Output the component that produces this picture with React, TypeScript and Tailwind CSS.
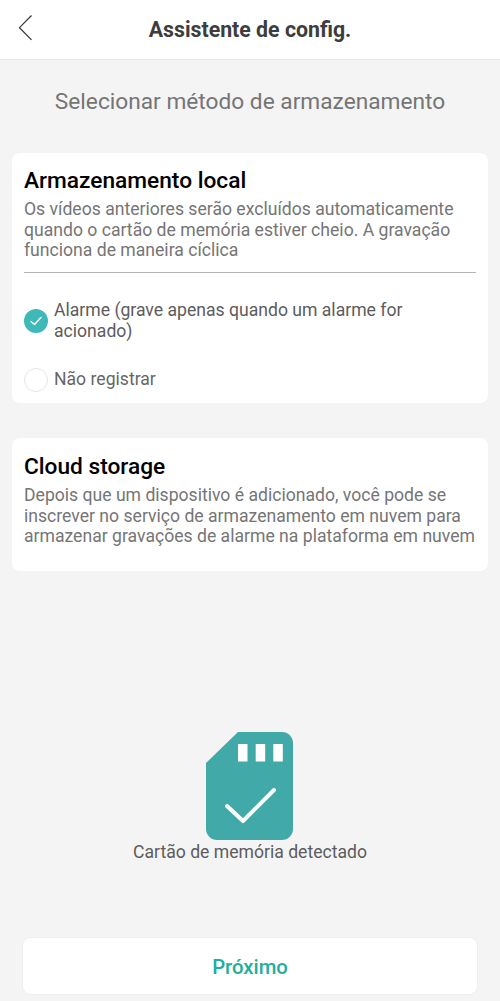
function BackIcon() {
  return (
    <svg className="absolute left-[16px] top-[12px]" width="20" height="32" viewBox="0 0 20 32" aria-hidden="true">
      <path d="M15.5 3.5L3.5 15.7L15.5 27.8" fill="none" stroke="#333" strokeWidth="1.2" />
    </svg>
  );
}

function SdCardIcon() {
  return (
    <svg width="88" height="108" viewBox="0 0 88 108" aria-hidden="true">
      <path d="M32 0H76a11 11 0 0 1 11 11V97a11 11 0 0 1-11 11H11A11 11 0 0 1 0 97V31Z" fill="#42a9a9" />
      <rect x="32" y="12" width="9.5" height="17.5" fill="#fff" />
      <rect x="49.7" y="12" width="9.5" height="17.5" fill="#fff" />
      <rect x="67.3" y="12" width="9.5" height="17.5" fill="#fff" />
      <path d="M21 74L37 89L68 58" fill="none" stroke="#fff" strokeWidth="4" strokeLinecap="round" strokeLinejoin="round" />
    </svg>
  );
}

export default function App() {
  return (
    <div className="flex h-[1001px] w-[500px] flex-col bg-[#f4f4f4] font-['Roboto',sans-serif]">
      <header className="relative flex h-[60px] shrink-0 items-center justify-center border-b border-[#e8e8e8] bg-white">
        <BackIcon />
        <h1 className="text-[21.3px] font-bold text-[#3d3d3d]">Assistente de config.</h1>
      </header>

      <p className="mt-[27px] text-center text-[22.7px] leading-[30px] text-[#757575]">Selecionar método de armazenamento</p>

      <section className="mx-3 mt-[36px] h-[250px] rounded-lg bg-white px-3 pt-[15px]">
        <h2 className="text-[22.7px] leading-[26px] font-medium text-black">Armazenamento local</h2>
        <p className="mt-[5px] text-[17.6px] leading-[20.5px] text-[#757575]">
          Os vídeos anteriores serão excluídos automaticamente quando o cartão de memória estiver cheio. A gravação funciona de maneira cíclica
        </p>
        <div className="mt-[11px] border-t border-[#b5b5b5]" />
        <div className="mt-[27px] flex items-center gap-[6px]">
          <span className="flex h-6 w-6 shrink-0 items-center justify-center rounded-full bg-[#3fb8b8]">
            <svg width="14" height="12" viewBox="0 0 14 12" aria-hidden="true">
              <path d="M2 6.5L5.5 9.5L12 2.5" fill="none" stroke="#fff" strokeWidth="1.5" strokeLinecap="round" strokeLinejoin="round" />
            </svg>
          </span>
          <span className="text-[17.6px] leading-[21px] text-[#5c5c5c]">Alarme (grave apenas quando um alarme for acionado)</span>
        </div>
        <div className="mt-[26px] flex items-center gap-[6px]">
          <span className="h-6 w-6 shrink-0 rounded-full border border-[#e6e6e6]" />
          <span className="text-[17.6px] leading-[21px] text-[#666]">Não registrar</span>
        </div>
      </section>

      <section className="mx-3 mt-[35px] h-[133px] rounded-lg bg-white px-3 pt-[16px]">
        <h2 className="text-[22.7px] leading-[26px] font-medium text-black">Cloud storage</h2>
        <p className="mt-[5px] text-[17.6px] leading-[20.5px] text-[#757575]">
          Depois que um dispositivo é adicionado, você pode se inscrever no serviço de armazenamento em nuvem para armazenar gravações de alarme na plataforma em nuvem
        </p>
      </section>

      <div className="mt-[161px] flex flex-col items-center">
        <div className="ml-[-1px]">
          <SdCardIcon />
        </div>
        <p className="mt-[2px] text-[17.6px] leading-[21px] text-[#5c5c5c]">Cartão de memória detectado</p>
      </div>

      <button className="mx-[23px] mt-[75px] flex h-[56px] items-center justify-center rounded-lg bg-white pt-[2px] text-[20.3px] font-medium text-[#20aea0] shadow-[0_0_0_1px_#eeeeee]">
        Próximo
      </button>
    </div>
  );
}
